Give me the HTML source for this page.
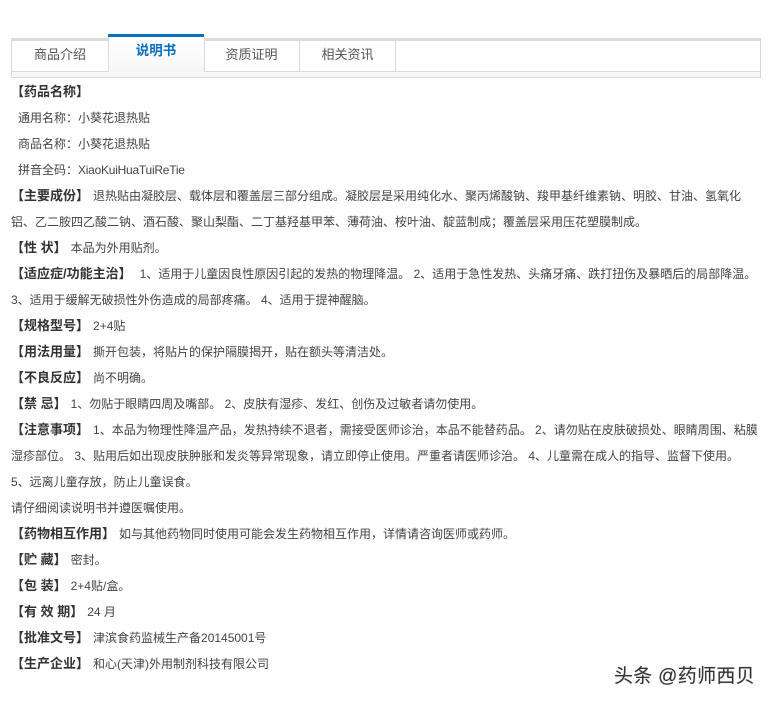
<!DOCTYPE html>
<html lang="zh">
<head>
<meta charset="utf-8">
<title>说明书</title>
<style>
html,body{margin:0;padding:0;background:#fff}
body{position:relative;width:772px;height:703px;overflow:hidden;font-family:"Liberation Sans","WenQuanYi Zen Hei","Noto Sans CJK SC",sans-serif;color:#444}
.l{position:absolute;left:11px;height:26px;margin-top:1px;line-height:26px;font-size:12px;white-space:nowrap}
.l b{font-size:13px;color:#333;margin-right:4px}
.box{position:absolute}
.tab{position:absolute;top:41px;height:30px;line-height:28px;text-align:center;font-size:13px;color:#555}
.wm{position:absolute;left:614px;top:664px;font-size:19px;line-height:26px;color:#333;white-space:nowrap;letter-spacing:.3px;text-shadow:0 0 1px rgba(0,0,0,.35)}
</style>
</head>
<body>
<div class="box" style="left:11px;top:38px;width:750px;height:3px;background:#dcdcdc"></div>
<div class="box" style="left:11px;top:71px;width:750px;height:5px;background:#f7f7f7;border-top:1px solid #dcdcdc;border-bottom:1px solid #dcdcdc"></div>
<div class="box" style="left:11px;top:38px;width:1px;height:40px;background:#dcdcdc"></div>
<div class="box" style="left:760px;top:38px;width:1px;height:40px;background:#d4d4d4"></div>
<div class="tab" style="left:12px;width:96px;border-right:1px solid #dcdcdc">商品介绍</div>
<div class="box" style="left:108px;top:34px;width:96px;height:3px;background:#0b6fc0"></div>
<div class="box" style="left:107px;top:37px;width:95px;height:35px;background:linear-gradient(#fff,#f6f6f6);border-right:1px solid #dcdcdc;border-left:1px solid #dcdcdc;margin-left:1px"></div>
<div class="box" style="left:108px;top:37px;width:96px;line-height:27px;text-align:center;font-size:13.5px;font-weight:bold;color:#0b6fc0">说明书</div>
<div class="tab" style="left:204px;width:95px;border-right:1px solid #dcdcdc">资质证明</div>
<div class="tab" style="left:300px;width:95px;border-right:1px solid #dcdcdc">相关资讯</div>

<div class="l" style="top:78px"><b>【药品名称】</b></div>
<div class="l" style="top:104px;left:18px">通用名称：小葵花退热贴</div>
<div class="l" style="top:130px;left:18px">商品名称：小葵花退热贴</div>
<div class="l" style="top:156px;left:18px">拼音全码：<span style="letter-spacing:-.25px">XiaoKuiHuaTuiReTie</span></div>
<div class="l" style="top:182px"><b>【主要成份】</b>退热贴由凝胶层、载体层和覆盖层三部分组成。凝胶层是采用纯化水、聚丙烯酸钠、羧甲基纤维素钠、明胶、甘油、氢氧化</div>
<div class="l" style="top:208px">铝、乙二胺四乙酸二钠、酒石酸、聚山梨酯、二丁基羟基甲苯、薄荷油、桉叶油、靛蓝制成；覆盖层采用压花塑膜制成。</div>
<div class="l" style="top:234px"><b>【性 状】</b>本品为外用贴剂。</div>
<div class="l" style="top:260px"><b style="margin-right:8px">【适应症/功能主治】</b>1、适用于儿童因良性原因引起的发热的物理降温。 2、适用于急性发热、头痛牙痛、跌打扭伤及暴晒后的局部降温。</div>
<div class="l" style="top:286px">3、适用于缓解无破损性外伤造成的局部疼痛。 4、适用于提神醒脑。</div>
<div class="l" style="top:312px"><b>【规格型号】</b>2+4贴</div>
<div class="l" style="top:338px"><b>【用法用量】</b>撕开包装，将贴片的保护隔膜揭开，贴在额头等清洁处。</div>
<div class="l" style="top:364px"><b>【不良反应】</b>尚不明确。</div>
<div class="l" style="top:390px"><b>【禁 忌】</b>1、勿贴于眼睛四周及嘴部。 2、皮肤有湿疹、发红、创伤及过敏者请勿使用。</div>
<div class="l" style="top:416px"><b>【注意事项】</b>1、本品为物理性降温产品，发热持续不退者，需接受医师诊治，本品不能替药品。 2、请勿贴在皮肤破损处、眼睛周围、粘膜</div>
<div class="l" style="top:442px">湿疹部位。 3、贴用后如出现皮肤肿胀和发炎等异常现象，请立即停止使用。严重者请医师诊治。 4、儿童需在成人的指导、监督下使用。</div>
<div class="l" style="top:468px">5、远离儿童存放，防止儿童误食。</div>
<div class="l" style="top:494px">请仔细阅读说明书并遵医嘱使用。</div>
<div class="l" style="top:520px"><b>【药物相互作用】</b>如与其他药物同时使用可能会发生药物相互作用，详情请咨询医师或药师。</div>
<div class="l" style="top:546px"><b>【贮 藏】</b>密封。</div>
<div class="l" style="top:572px"><b>【包 装】</b>2+4贴/盒。</div>
<div class="l" style="top:598px"><b>【有 效 期】</b>24 月</div>
<div class="l" style="top:624px"><b>【批准文号】</b>津滨食药监械生产备20145001号</div>
<div class="l" style="top:650px"><b>【生产企业】</b>和心(天津)外用制剂科技有限公司</div>
<div class="wm">头条 @药师西贝</div>
</body>
</html>
